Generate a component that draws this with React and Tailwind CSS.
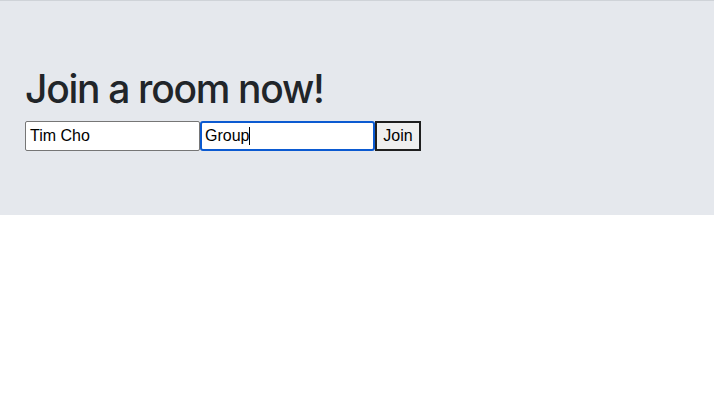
export default function App() {
  const font = { fontFamily: '"Liberation Sans", Arial, sans-serif' };
  return (
    <div className="min-h-[406px] bg-white" style={font}>
      <div className="border-t border-[#cfd3d8] bg-[#e5e8ed] px-[25px] pt-[64px] pb-[64px]">
        <h1 className="font-['Inter',sans-serif] text-[39px] leading-[48px] font-medium text-[#212529] tracking-[-1.3px] mb-[8px]">
          Join a room now!
        </h1>
        <div className="flex">
          <div className="flex items-center w-[175px] h-[30px] bg-white border border-[#767676] rounded-[2px] px-[4px] text-[16px] text-black">
            Tim Cho
          </div>
          <div className="flex items-center w-[175px] h-[30px] bg-white border-2 border-[#0b5ad1] rounded-[3px] px-[3px] text-[16px] text-black">
            <span>Group</span>
            <span className="inline-block w-px h-[18px] bg-black" />
          </div>
          <div className="flex items-center justify-center w-[46px] h-[30px] bg-[#efefef] border-2 border-[#1f1f1f] text-[16px] text-black">
            Join
          </div>
        </div>
      </div>
    </div>
  );
}
